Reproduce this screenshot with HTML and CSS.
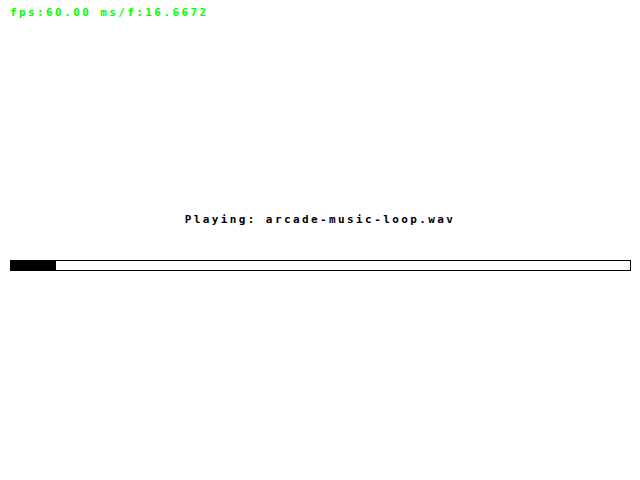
FILE: index.html
```html
<!DOCTYPE html>
<html>
<head>
<meta charset="utf-8">
<link rel="stylesheet" href="styles.css">
</head>
<body>
<div class="screen">
  <div class="fps">fps:60.00 ms/f:16.6672</div>
  <div class="playing">Playing: arcade-music-loop.wav</div>
  <div class="bar"><div class="fill" style="width:45px"></div></div>
</div>
</body>
</html>
```
FILE: styles.css
```css
html, body {
  margin: 0;
  padding: 0;
  background: #fff;
}
.screen {
  width: 640px;
  height: 480px;
  display: flex;
  flex-direction: column;
  font-family: "DejaVu Sans Mono", "Liberation Mono", monospace;
  font-weight: bold;
  font-size: 11px;
  letter-spacing: 2.4px;
  line-height: 12px;
}
.fps {
  color: #00ff00;
  margin: 7px 0 0 10px;
  height: 12px;
}
.playing {
  color: #000;
  text-align: center;
  margin-top: 195px;
  height: 12px;
}
.bar {
  margin: 34px 0 0 10px;
  width: 619px;
  height: 9px;
  border: 1px solid #000;
  display: flex;
}
.fill {
  background: #000;
  height: 100%;
}
```
